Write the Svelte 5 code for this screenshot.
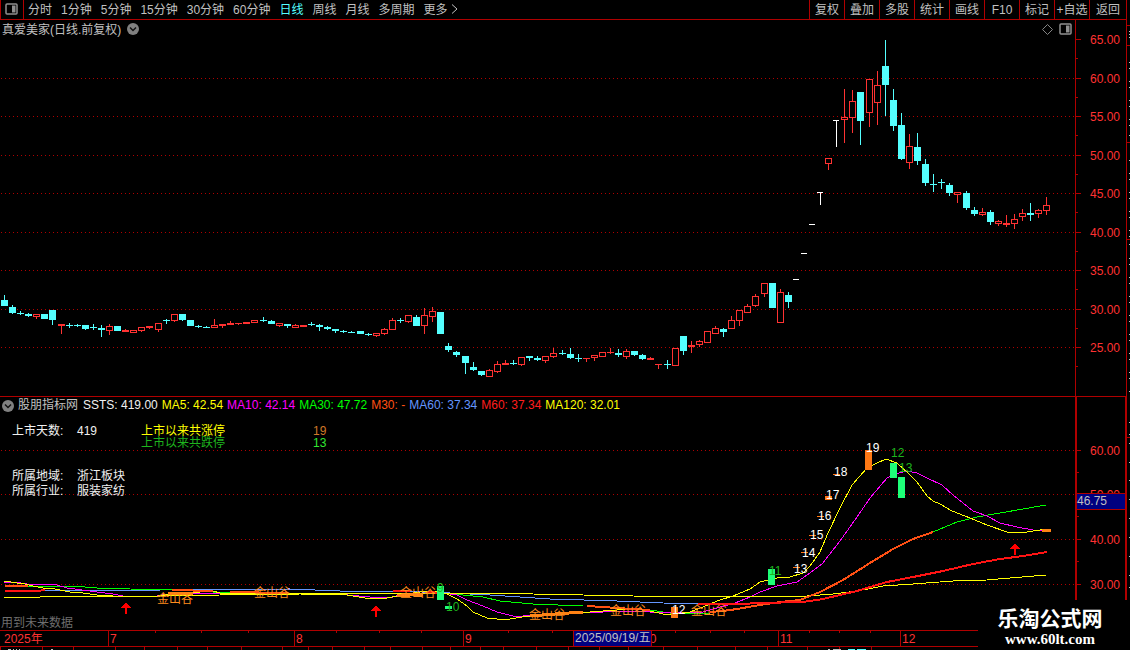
<script lang="ts">
	const periods = ['分时', '1分钟', '5分钟', '15分钟', '30分钟', '60分钟', '日线', '周线', '月线', '多周期'];
	const tools = ['复权', '叠加', '多股', '统计', '画线', 'F10', '标记', '+自选', '返回'];
	let period = $state('日线');

	const STEP = 8.08;
	const cx = (i: number) => Math.round(4 + STEP * i);

	// kind, high, body top, body bottom, low
	// r = up, c = down, w = limit up
	const candles: [string, number, number, number, number][] = [
		['c', 295, 300, 306, 306], ['c', 305, 307, 313, 314], ['c', 311, 313, 314, 315], ['c', 313, 314, 316, 317],
		['r', 314, 314, 317, 319], ['c', 314, 314, 319, 319], ['c', 310, 310, 320, 325], ['r', 324, 324, 326, 334],
		['c', 323, 325, 326, 328], ['c', 324, 325, 326, 327], ['c', 325, 325, 329, 330], ['c', 324, 327, 328, 330],
		['c', 325, 328, 330, 337], ['r', 324, 326, 331, 335], ['c', 326, 326, 331, 331], ['r', 329, 330, 332, 332],
		['r', 330, 330, 333, 333], ['r', 327, 327, 331, 332], ['r', 326, 326, 328, 329], ['r', 323, 323, 330, 332],
		['c', 319, 320, 321, 324], ['r', 314, 314, 321, 322], ['c', 314, 314, 320, 321], ['c', 320, 320, 326, 326],
		['c', 325, 326, 327, 328], ['c', 326, 327, 328, 328], ['r', 319, 325, 328, 328], ['r', 324, 324, 326, 328],
		['r', 321, 323, 325, 325], ['r', 323, 323, 324, 325], ['r', 322, 322, 324, 324], ['r', 320, 320, 323, 323],
		['c', 317, 320, 321, 322], ['c', 320, 321, 324, 324], ['r', 323, 323, 326, 327], ['c', 324, 324, 326, 328],
		['r', 324, 325, 328, 328], ['r', 325, 325, 327, 327], ['c', 322, 324, 325, 326], ['c', 324, 325, 327, 331],
		['c', 326, 327, 329, 330], ['c', 329, 329, 331, 333], ['c', 330, 331, 332, 333], ['c', 331, 332, 333, 333],
		['c', 331, 331, 334, 334], ['c', 333, 334, 335, 336], ['r', 333, 333, 336, 337], ['r', 328, 329, 334, 335],
		['r', 318, 320, 330, 330], ['c', 318, 320, 321, 323], ['r', 315, 315, 322, 323], ['c', 315, 317, 326, 326],
		['r', 308, 315, 326, 334], ['r', 307, 311, 317, 322], ['c', 312, 312, 334, 334], ['c', 343, 346, 350, 352],
		['c', 351, 352, 355, 357], ['c', 356, 356, 363, 374], ['c', 362, 367, 370, 371], ['c', 371, 371, 375, 376],
		['r', 369, 370, 377, 377], ['r', 361, 364, 372, 373], ['r', 360, 363, 365, 365], ['c', 360, 363, 364, 365],
		['r', 357, 357, 365, 366], ['c', 356, 356, 358, 361], ['c', 356, 358, 360, 361], ['r', 356, 356, 361, 363],
		['r', 348, 353, 357, 358], ['c', 350, 353, 354, 355], ['c', 348, 354, 358, 359], ['c', 354, 358, 359, 362],
		['r', 358, 358, 359, 362], ['r', 355, 355, 358, 361], ['r', 352, 352, 357, 357], ['r', 348, 352, 353, 354],
		['c', 349, 353, 355, 357], ['r', 349, 351, 357, 359], ['c', 351, 351, 355, 356], ['c', 354, 355, 359, 360],
		['r', 357, 358, 360, 360], ['r', 364, 364, 365, 369], ['c', 360, 364, 365, 369], ['r', 348, 348, 366, 366],
		['c', 336, 336, 351, 355], ['r', 341, 345, 347, 353], ['r', 340, 341, 345, 347], ['r', 331, 331, 343, 343],
		['r', 326, 328, 334, 334], ['c', 328, 329, 332, 337], ['r', 316, 320, 329, 329], ['r', 310, 310, 321, 326],
		['r', 304, 306, 313, 313], ['r', 294, 296, 306, 307], ['r', 283, 283, 294, 297], ['c', 283, 283, 308, 308],
		['r', 289, 292, 323, 323], ['c', 292, 295, 302, 308], ['w', 279, 279, 280, 280], ['w', 253, 253, 254, 254],
		['w', 224, 224, 225, 225], ['w', 192, 192, 193, 205], ['r', 158, 158, 164, 170], ['w', 120, 120, 121, 147],
		['r', 89, 117, 120, 143], ['r', 90, 101, 118, 133], ['c', 92, 92, 121, 145], ['r', 79, 79, 113, 127],
		['r', 71, 85, 103, 125], ['c', 40, 66, 85, 116], ['c', 89, 100, 126, 131], ['c', 113, 125, 159, 160],
		['r', 134, 146, 163, 169], ['c', 133, 147, 161, 165], ['c', 159, 164, 183, 186], ['c', 174, 184, 185, 192],
		['c', 179, 182, 183, 189], ['c', 183, 185, 193, 196], ['r', 192, 192, 195, 203], ['c', 191, 193, 208, 210],
		['c', 207, 210, 214, 216], ['r', 208, 212, 215, 216], ['c', 210, 212, 222, 225], ['r', 220, 221, 224, 226],
		['r', 215, 223, 225, 227], ['r', 214, 219, 224, 229], ['r', 209, 213, 217, 221], ['c', 203, 213, 215, 221],
		['r', 209, 210, 214, 218], ['r', 197, 205, 211, 215]
	];

	const priceScale: [number, string][] = [
		[39, '65.00'], [78, '60.00'], [116, '55.00'], [155, '50.00'], [193, '45.00'],
		[232, '40.00'], [270, '35.00'], [309, '30.00'], [347, '25.00']
	];
	const maScale: [number, string][] = [[450, '60.00'], [494, '50.00'], [539, '40.00'], [584, '30.00']];

	const legend = [
		['SSTS: 419.00', '#f0f0f0'], ['MA5: 42.54', '#ffff00'], ['MA10: 42.14', '#ff00ff'], ['MA30: 47.72', '#00ff00'],
		['M30: -', '#ff5014'], ['MA60: 37.34', '#6496ff'], ['M60: 37.34', '#ff1e1e'], ['MA120: 32.01', '#ffff00']
	];

	// color, width, points
	const lines: [string, number, string][] = [
		['#6496ff', 1, '45,590 160,590 290,589 340,591 393,591 450,593 490,595 550,599 617,601 663,603 700,604'],
		['#00ff00', 1, '28,586 72,586 97,588 130,589 172,590'],
		['#00ff00', 1, '213,592 230,592'],
		['#00ff00', 1, '288,593 360,594 453,594 483,597 500,601 533,604 583,606'],
		['#00ff00', 1, '650,610 670,613 683,613 710,613'],
		['#00ff00', 1, '933,532 957,522 977,517 1000,513 1023,509 1046,505'],
		['#ff00ff', 1, '4,582 15,582 27,584 57,585 67,588 82,590 97,592 113,594 123,596 157,596 173,593 290,593 325,593 337,594 370,597 393,597 400,595 437,592 457,595 467,600 483,606 497,612 513,616 523,616 550,614 583,612 603,612 617,611 650,612 683,613 703,612 720,607 735,603 750,597 760,592 777,586 797,582 810,573 822,564 840,541 857,517 870,498 887,478 895,474 907,471 917,473 927,478 942,485 953,495 973,511 987,516 1000,523 1017,527 1033,530 1046,530'],
		['#ffff00', 1, '4,581 17,583 25,584 33,586 43,588 55,589 70,592 83,593 97,595 113,596 158,596 173,593 200,592 213,591 220,593 233,594 247,593 287,593 300,594 347,595 365,598 387,598 397,596 413,593 427,591 438,591 447,594 457,599 467,606 473,612 487,618 497,619 510,619 522,617 550,615 590,612 617,610 633,609 650,611 663,614 675,614 690,612 703,607 717,601 733,596 750,589 760,582 777,578 790,577 803,573 810,566 820,552 828,533 840,508 852,485 867,468 875,464 886,459 897,463 908,473 917,482 927,496 933,501 940,504 952,511 970,518 987,525 1007,532 1027,532 1046,529'],
		['#ffff00', 1, '4,597 40,597 160,596 220,595 300,594 457,593 533,594 633,596 727,597 807,596 833,594 857,591 873,588 883,586 913,584 953,581 987,580 1010,578 1046,575'],
		['#ff5014', 2, '5,586 28,586'],
		['#ff5014', 2, '172,590 213,591'],
		['#ff5014', 2, '230,592 288,593'],
		['#ff5014', 2, '587,606 633,609 650,610'],
		['#ff5014', 2, '710,612 723,611 737,609 760,605 780,602 800,600 820,592 843,580 870,563 893,549 913,539 933,532'],
		['#ff1414', 2, '5,591 37,591 45,590'],
		['#ff1414', 2, '393,591 410,591'],
		['#ff1414', 2, '427,592 442,593'],
		['#ff1414', 2, '698,604 740,604 760,603 803,602 823,599 857,591 887,582 913,577 943,571 973,564 1000,559 1023,556 1047,552'],
		['#ff8214', 3, '168,594 193,593'],
		['#ff8214', 3, '397,596 423,594'],
		['#ff8214', 3, '530,616 555,614 583,612'],
		['#ff8214', 3, '1042,530 1051,530']
	];

	// x, y, height
	const upBars = [[865, 450, 20], [825, 496, 4], [671, 607, 11], [833, 474, 1], [817, 516, 1], [809, 535, 1], [801, 552, 1], [793, 567, 1]];
	const downBars = [[890, 463, 15], [898, 477, 21], [768, 569, 16], [437, 586, 14], [445, 606, 3]];
	const counts: [number, number, string, string][] = [
		[866, 452, '19', 'up'], [834, 476, '18', 'up'], [826, 499, '17', 'up'], [818, 520, '16', 'up'],
		[810, 539, '15', 'up'], [802, 557, '14', 'up'], [794, 573, '13', 'up'], [672, 614, '12', 'up'],
		[891, 457, '12', 'down'], [899, 472, '13', 'down'], [769, 575, '11', 'down'], [437, 592, '9', 'down'], [446, 611, '10', 'down']
	];
	const valleys = [[157, 603], [254, 597], [400, 597], [529, 619], [610, 615], [691, 615]];
	const arrows = [[126, 602], [376, 605], [1015, 543]];

	const months: [number, string][] = [[108, '7'], [294, '8'], [463, '9'], [641, '10'], [778, '11'], [900, '12']];
	const weekTicks = [155, 201, 248, 336, 379, 421, 508, 552, 675, 710, 744, 809, 839, 870];
	const footTicks = [0, 42, 73, 115, 144, 177, 207, 241, 282, 308, 332, 364, 390, 422, 450, 480, 503, 536, 568, 599, 628, 663, 697, 735, 767, 807, 839, 871];
	const edgeMarks = [31, 34, 37, 62, 68, 81, 87, 100, 106, 119, 125, 135, 160, 173, 179, 192, 198, 211, 217, 230, 236, 244, 258, 264, 277, 283, 296, 302, 315, 321, 334, 340, 353, 359, 372, 378, 391, 422, 434, 443, 462, 480, 499, 518, 537, 556, 575, 587];
</script>

{#snippet paneIcon()}
	<svg width="13" height="12" viewBox="0 0 13 12">
		<rect x="1" y="1" width="11" height="10" rx="1" fill="none" stroke="#909090" stroke-width="1.5" />
		<rect x="7" y="2.5" width="3.5" height="7" fill="#909090" />
	</svg>
{/snippet}

{#snippet chevron()}
	<svg width="12" height="12" viewBox="0 0 12 12">
		<circle cx="6" cy="6" r="6" fill="#808080" />
		<path d="M3 4.5L6 7.5L9 4.5" fill="none" stroke="#101010" stroke-width="1.5" />
	</svg>
{/snippet}

<div class="screen">
	<main>
		<header>
			<button class="pane" aria-label="侧栏">{@render paneIcon()}</button>
			<nav class="periods">
				{#each periods as name}
					<button class:active={name === period} onclick={() => (period = name)}>{name}</button>
				{/each}
				<button class="more">
					更多
					<svg width="7" height="13" viewBox="0 0 7 13"><path d="M1 0.5L6 5L1 9.5" fill="none" stroke="#c0c0c0" /></svg>
				</button>
			</nav>
			<nav class="tools">
				{#each tools as name}
					<button>{name}</button>
				{/each}
			</nav>
		</header>

		<section class="price">
			<div class="plot">
				<svg class="chart" height="376">
					<g transform="translate(0 -20)" shape-rendering="crispEdges">
						{#each priceScale.slice(1) as [y]}
							<line class="grid" x1="1" x2="100%" y1={y + 0.5} y2={y + 0.5} />
						{/each}
						{#each candles as [kind, high, top, bottom, low], i}
							<g class={kind}>
								<rect x={cx(i)} y={high} width="1" height={top - high} />
								<rect x={cx(i)} y={bottom} width="1" height={low - bottom} />
								{#if kind === 'r' && bottom - top > 2}
									<rect class="hollow" x={cx(i) - 2.5} y={top + 0.5} width="6" height={bottom - top - 1} />
								{:else}
									<rect x={cx(i) - 3} y={top} width={kind === 'w' ? 6 : 7} height={bottom - top} />
								{/if}
							</g>
						{/each}
					</g>
				</svg>
				<div class="title">
					<span>真爱美家(日线.前复权)</span>
					<button aria-label="展开">{@render chevron()}</button>
					<button class="mark" aria-label="标记">
						<svg width="11" height="11" viewBox="0 0 11 11"><path d="M5.5 0.5L10.5 5.5L5.5 10.5L0.5 5.5Z" fill="none" stroke="#858585" /></svg>
					</button>
					<button aria-label="分栏">{@render paneIcon()}</button>
				</div>
			</div>
			<svg class="axis" width="51" height="376">
				<g transform="translate(0 -20)">
					<rect width="1" height="396" />
					{#each priceScale as [y, label]}
						<rect y={y} width="6" height="1" />
						<rect y={y + 19} width="3" height="1" />
						<text x="15" y={y + 5}>{label}</text>
					{/each}
				</g>
			</svg>
		</section>

		<section class="indicator">
			<div class="plot">
				<svg class="chart" height="233">
					<g transform="translate(0 -397)">
						<g shape-rendering="crispEdges">
							{#each maScale as [y]}
								<line class="grid" x1="1" x2="100%" y1={y + 0.5} y2={y + 0.5} />
							{/each}
							{#each lines as [color, width, points]}
								<polyline {points} fill="none" stroke={color} stroke-width={width} />
							{/each}
							{#each upBars as [x, y, h]}
								<rect {x} {y} width="7" height={h} fill="#ff7814" />
							{/each}
							{#each downBars as [x, y, h]}
								<rect {x} {y} width="7" height={h} fill="#1eff78" />
							{/each}
							{#each arrows as [x, y]}
								<path d="M{x} {y}l5 6h-4v6h-2v-6h-4z" fill="#ff0000" />
							{/each}
						</g>
						{#each valleys as [x, y]}
							<text class="valley" {x} {y}>金山谷</text>
						{/each}
						{#each counts as [x, y, n, dir]}
							<text class={dir} {x} {y}>{n}</text>
						{/each}
					</g>
				</svg>
				<div class="notes">
					<div class="legend">
						<button aria-label="指标">{@render chevron()}</button>
						<span class="name">股朋指标网</span>
						{#each legend as [text, color]}
							<span style="color: {color}">{text}</span>
						{/each}
					</div>
					<div class="stats">
						<span>上市天数:</span><span>419</span>
						<div class="limits">
							<span class="yellow">上市以来共涨停</span><span class="orange">19</span>
							<span class="green">上市以来共跌停</span><span class="lime">13</span>
						</div>
					</div>
					<div class="company">
						<span>所属地域:</span><span>浙江板块</span>
						<span>所属行业:</span><span>服装家纺</span>
					</div>
					<div class="warning">用到未来数据</div>
				</div>
			</div>
			<svg class="axis" width="51" height="233">
				<g transform="translate(0 -397)">
					<rect y="397" width="2" height="233" />
					<rect x="50" y="397" width="1" height="233" />
					{#each maScale as [y, label]}
						<rect y={y} width="6" height="1" />
						<rect y={y + 22} width="4" height="1" />
						<text x="15" y={y + 5}>{label}</text>
					{/each}
					<rect x="2" y="493" width="49" height="17" />
					<rect x="2" y="494" width="48" height="15" fill="#000080" />
					<text class="cursor" x="2" y="505">46.75</text>
				</g>
			</svg>
		</section>

		<svg class="dates" height="17">
			<rect width="100%" height="1" />
			<rect y="16" width="100%" height="1" />
			<text x="4" y="13">2025年</text>
			{#each weekTicks as x}
				<rect {x} width="1" height="3" />
			{/each}
			{#each months as [x, label]}
				<rect {x} width="1" height="16" />
				<text x={x + 2} y="13">{label}</text>
			{/each}
			<rect x="573" width="79" height="16" />
			<rect x="574" y="1" width="77" height="15" fill="#000080" />
			<text class="cursor" x="575" y="12">2025/09/19/五</text>
		</svg>
		<svg class="dates" height="3">
			{#each footTicks as x}
				<rect {x} width="1" height="3" />
			{/each}
			<path d="M8 2.5h3m2 0h1m2 0h1m2 0h1m31 0h2M828 2.5h2m3 0h8" stroke="#c0c0c0" />
			<path d="M848 2.5h7m2 0h9" stroke="#54ffff" />
		</svg>
	</main>

	<svg class="edge" width="3">
		{#each [25, 45, 142, 239, 437] as y}
			<rect {y} width="3" height="1" fill="#b00000" />
		{/each}
		{#each edgeMarks as y}
			<rect x="2" {y} width="1" height="1" fill="#c0c0c0" />
		{/each}
	</svg>

	<div class="brand">
		<strong>乐淘公式网</strong>
		<a href="http://www.60lt.com">www.60lt.com</a>
	</div>
</div>

<style>
	:global(body) {
		background: #000;
	}
	.screen {
		position: relative;
		display: flex;
		background: #000;
		color: #c0c0c0;
		font: 12px/15px 'Liberation Sans', 'Noto Sans CJK SC', sans-serif;
		white-space: nowrap;
		overflow: hidden;
	}
	main {
		flex: 1;
		min-width: 0;
		border-right: 1px solid #b00000;
	}
	svg {
		display: block;
	}
	button {
		background: none;
		border: 0;
		padding: 0;
		color: inherit;
		font: inherit;
		cursor: pointer;
	}

	header {
		display: flex;
		height: 19px;
		border-bottom: 1px solid #b00000;
	}
	.pane {
		display: flex;
		align-items: center;
		padding: 0 5px 2px 4px;
		border: 1px solid #b00000;
		border-width: 0 1px;
	}
	nav button {
		padding-top: 2px;
	}
	.periods {
		display: flex;
		gap: 9px;
		padding-left: 4px;
	}
	.periods .active {
		color: #54ffff;
	}
	.more {
		display: flex;
		align-items: center;
		gap: 3px;
	}
	.tools {
		display: flex;
		margin-left: auto;
	}
	.tools button {
		width: 35px;
		border-left: 1px solid #b00000;
	}
	.tools button:last-child {
		width: 37px;
	}

	section {
		display: flex;
	}
	.indicator {
		border-top: 1px solid #b00000;
	}
	.plot {
		display: grid;
		grid-template-columns: minmax(0, 1fr);
		flex: 1;
		min-width: 0;
	}
	.plot > * {
		grid-area: 1 / 1;
	}
	.chart,
	.dates {
		width: 100%;
	}
	.grid {
		stroke: #b00000;
		stroke-dasharray: 1 3;
	}
	.r {
		fill: #ff3232;
	}
	.c {
		fill: #54ffff;
	}
	.w {
		fill: #fff;
	}
	.hollow {
		fill: #000;
		stroke: #ff3232;
	}
	.axis rect,
	.dates rect {
		fill: #b00000;
	}
	.axis rect[fill],
	.dates rect[fill] {
		fill: #000080;
	}
	.axis text,
	.dates text {
		fill: #ff3232;
	}
	.axis .cursor,
	.dates .cursor {
		fill: #c0c0c0;
	}
	.valley {
		fill: #ff8c1e;
	}
	.up {
		fill: #fff;
	}
	.down {
		fill: #1eb41e;
	}

	.title {
		display: flex;
		align-items: center;
		align-self: start;
		gap: 6px;
		height: 18px;
		padding: 0 3px 0 2px;
	}
	.title span {
		padding-top: 2px;
	}
	.mark {
		margin-left: auto;
	}

	.notes {
		display: flex;
		flex-direction: column;
		color: #f0f0f0;
	}
	.legend {
		display: flex;
		align-items: center;
		gap: 4px;
		height: 17px;
		padding-left: 2px;
	}
	.legend .name {
		padding-right: 1px;
		color: #c0c0c0;
	}
	.stats {
		display: grid;
		grid-template-columns: 65px 64px auto;
		justify-content: start;
		padding: 10px 0 0 12px;
	}
	.limits {
		display: grid;
		grid-template-columns: 172px auto;
		line-height: 12px;
		padding-top: 1px;
	}
	.company {
		display: grid;
		grid-template-columns: 65px auto;
		justify-content: start;
		padding: 20px 0 0 12px;
	}
	.yellow {
		color: #ffff00;
	}
	.orange {
		color: #d27828;
	}
	.green {
		color: #1eb41e;
	}
	.lime {
		color: #32e632;
	}
	.warning {
		margin-top: auto;
		padding-left: 1px;
		line-height: 13px;
		color: #6e6e6e;
	}

	.edge {
		flex: none;
		height: auto;
	}
	.brand {
		position: absolute;
		right: 0;
		bottom: 0;
		display: flex;
		flex-direction: column;
		align-items: center;
		box-sizing: border-box;
		width: 152px;
		height: 50px;
		padding: 8px 8px 0 0;
		background: #000;
		color: #fff;
	}
	.brand strong {
		font-size: 21px;
		line-height: 22px;
	}
	.brand a {
		color: #fff;
		font: bold 15px/18px 'Liberation Serif', serif;
		text-decoration: none;
	}
</style>
